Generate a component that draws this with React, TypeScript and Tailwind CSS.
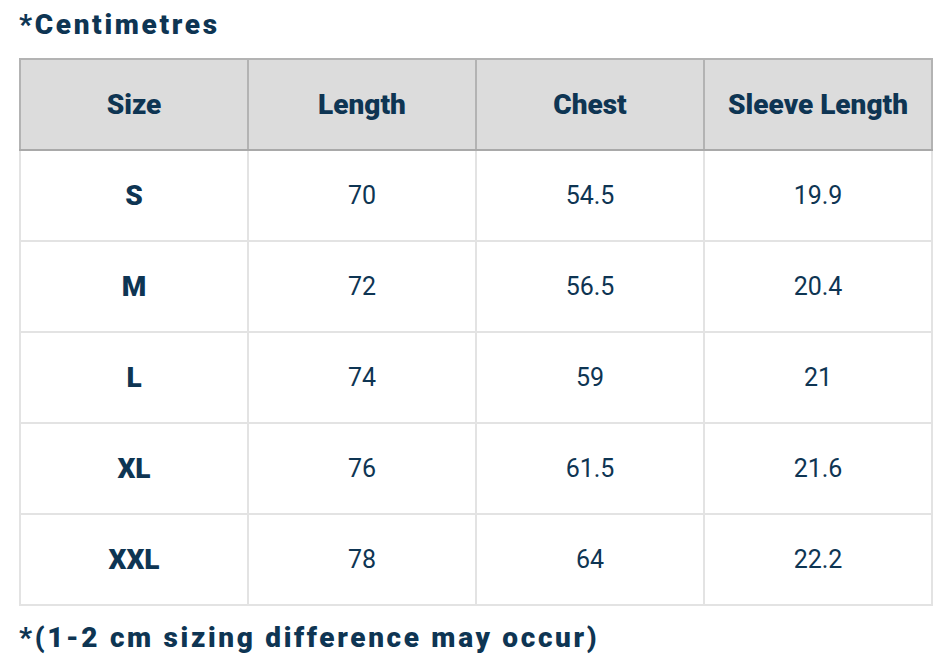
const header = ["Size", "Length", "Chest", "Sleeve Length"];
const rows = [
  ["S", "70", "54.5", "19.9"],
  ["M", "72", "56.5", "20.4"],
  ["L", "74", "59", "21"],
  ["XL", "76", "61.5", "21.6"],
  ["XXL", "78", "64", "22.2"],
];

export default function App() {
  return (
    <div className="min-h-[664px] w-[952px] bg-white px-[19px] pt-[6px] text-[#0e3553] font-['Roboto',sans-serif]">
      <h1 className="text-[28px] leading-[38px] font-black tracking-[0.095em]">*Centimetres</h1>
      <table className="mt-[14px] w-[914px] table-fixed border-collapse border-2 border-[#a9a9a9]">
        <thead>
          <tr className="h-[91px] bg-[#dcdcdc]">
            {header.map((h) => (
              <th key={h} className="border-2 border-[#b3b3b3] border-b-[#a9a9a9] text-[28px] font-black">
                {h}
              </th>
            ))}
          </tr>
        </thead>
        <tbody>
          {rows.map((r) => (
            <tr key={r[0]} className="h-[91px]">
              {r.map((c, i) => (
                <td
                  key={i}
                  className={`border-2 border-[#e3e3e3] text-center ${i === 0 ? "text-[28px] font-black" : "text-[25px] font-normal"}`}
                >
                  {c}
                </td>
              ))}
            </tr>
          ))}
        </tbody>
      </table>
      <p className="mt-[14px] text-[28px] leading-[36px] font-black tracking-[0.095em]">*(1-2 cm sizing difference may occur)</p>
    </div>
  );
}
